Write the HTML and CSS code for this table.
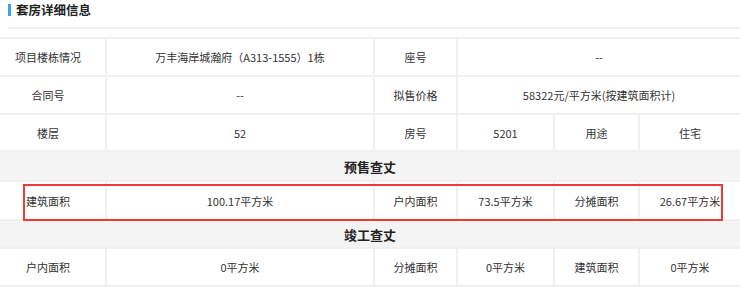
FILE: index.html
```html
<!DOCTYPE html>
<html lang="zh-CN">
<head>
<meta charset="utf-8">
<link rel="stylesheet" href="styles.css">
</head>
<body>
<div class="page">
  <div class="title"><span class="bar"></span><span class="title-text">套房详细信息</span></div>
  <div class="table">
    <div class="row r38">
      <div class="cell first">项目楼栋情况</div>
      <div class="cell">万丰海岸城瀚府（A313-1555）1栋</div>
      <div class="cell">座号</div>
      <div class="cell span3">--</div>
    </div>
    <div class="row r38">
      <div class="cell first">合同号</div>
      <div class="cell">--</div>
      <div class="cell">拟售价格</div>
      <div class="cell span3">58322元/平方米(按建筑面积计)</div>
    </div>
    <div class="row r37">
      <div class="cell first">楼层</div>
      <div class="cell">52</div>
      <div class="cell">房号</div>
      <div class="cell">5201</div>
      <div class="cell">用途</div>
      <div class="cell">住宅</div>
    </div>
    <div class="row section h30"><div class="cell full">预售查丈</div></div>
    <div class="row r39 marked">
      <div class="cell first">建筑面积</div>
      <div class="cell">100.17平方米</div>
      <div class="cell">户内面积</div>
      <div class="cell">73.5平方米</div>
      <div class="cell">分摊面积</div>
      <div class="cell">26.67平方米</div>
      <div class="mark"></div>
    </div>
    <div class="row section h28"><div class="cell full">竣工查丈</div></div>
    <div class="row r38">
      <div class="cell first">户内面积</div>
      <div class="cell">0平方米</div>
      <div class="cell">分摊面积</div>
      <div class="cell">0平方米</div>
      <div class="cell">建筑面积</div>
      <div class="cell">0平方米</div>
    </div>
  </div>
</div>
</body>
</html>
```
FILE: styles.css
```css
html, body {
  margin: 0;
  padding: 0;
  background: #fff;
}
body {
  font-family: "Noto Sans CJK SC", "Liberation Sans", sans-serif;
  color: #333;
  font-size: 11px;
  width: 740px;
  height: 287px;
  overflow: hidden;
}
.title {
  margin-left: 8px;
  height: 27px;
  border-bottom: 2px solid #f0f0f0;
  display: flex;
  align-items: flex-start;
  margin-bottom: 8px;
}
.bar {
  width: 3px;
  height: 12px;
  background: #409eff;
  margin-top: 4px;
  margin-right: 5px;
}
.title-text {
  font-size: 12.5px;
  font-weight: bold;
  line-height: 20px;
  color: #222;
  margin-top: 0px;
}
.table {
  border-bottom: 2px solid #f0f0f0;
}
.row {
  display: grid;
  grid-template-columns: 105px 268px 83px 97px 85px 102px;
  border-top: 2px solid #f0f0f0;
  box-sizing: border-box;
}
.r38 { height: 38px; }
.r37 { height: 37px; }
.r39 { height: 39px; }
.h30 { height: 30px; }
.h28 { height: 28px; }
.cell {
  display: flex;
  align-items: center;
  justify-content: center;
  border-left: 2px solid #f0f0f0;
  white-space: nowrap;
}
.cell.first {
  border-left: none;
  padding-right: 9px;
}
.span3 { grid-column: span 3; }
.section {
  background: #f4f4f4;
}
.section .full {
  grid-column: 1 / -1;
  border-left: none;
  font-size: 13px;
  font-weight: bold;
  color: #222;
}
.marked { position: relative; }
.mark {
  position: absolute;
  left: 23px;
  top: 2px;
  width: 700px;
  height: 37px;
  box-sizing: border-box;
  border: 2px solid #f03a3a;
  pointer-events: none;
}
```
